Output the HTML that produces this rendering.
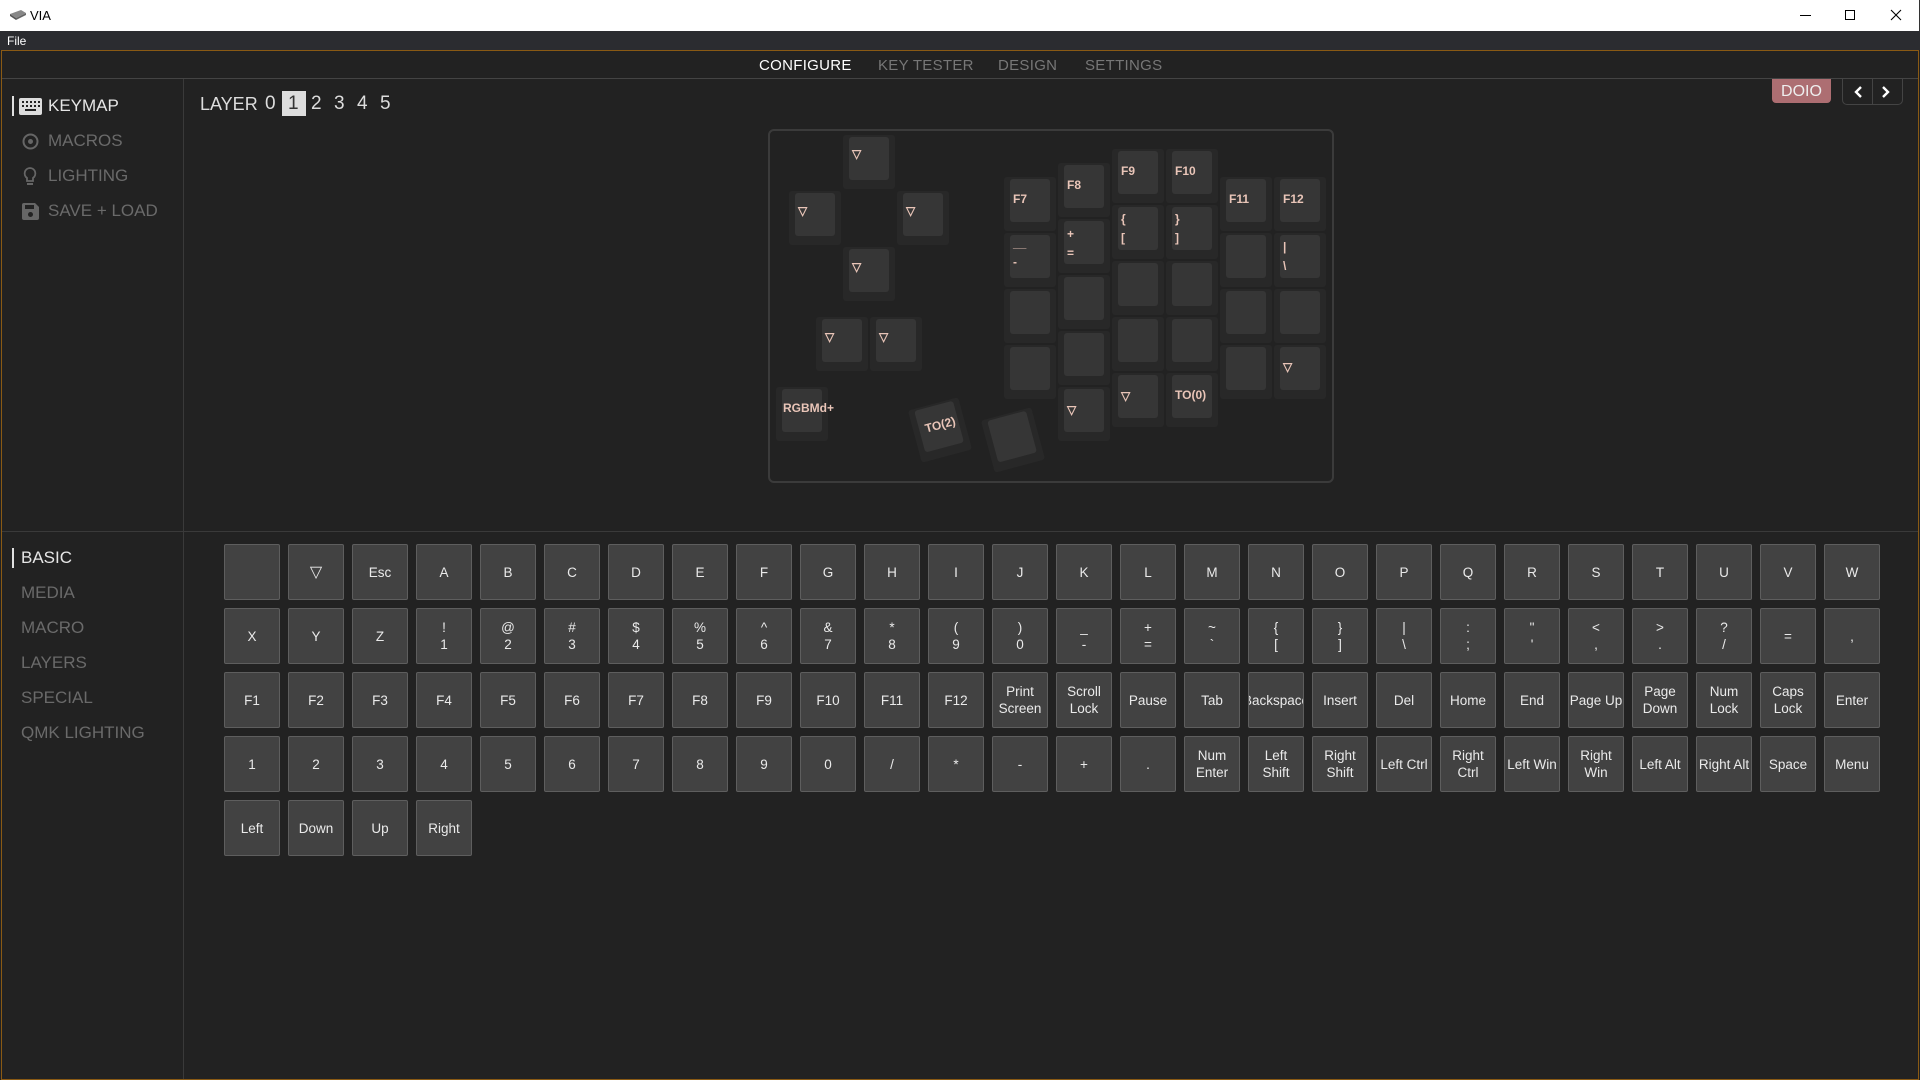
<!DOCTYPE html>
<html><head><meta charset="utf-8"><style>
*{box-sizing:border-box;margin:0;padding:0}
body{width:1920px;height:1080px;overflow:hidden;background:#222;font-family:"Liberation Sans",sans-serif;position:relative}
.abs{position:absolute}
#title{left:0;top:0;width:1920px;height:31px;background:#fff;border-right:1px solid #333}
#menu{left:0;top:31px;width:1920px;height:19px;background:#2b2c30;color:#fff;font-size:12px;padding:3px 0 0 7px}
#frame{left:1px;top:50px;width:1918px;height:1030px;border:1px solid #8a5a14}
#nav{left:2px;top:51px;width:1916px;height:28px;border-bottom:1px solid #444}
.tab{position:absolute;top:57px;font-size:15px;color:#777;letter-spacing:.3px}
#side{left:2px;top:79px;width:182px;height:1000px;border-right:1px solid #3a3a3a}
#hdiv{left:2px;top:531px;width:1916px;height:1px;background:#3a3a3a}
.si{position:absolute;left:48px;font-size:17px;color:#6a6a6a}
.si2{position:absolute;left:21px;font-size:17px;color:#6a6a6a}
.bar{position:absolute;left:12px;width:2px;height:20px;background:#e0e0e0}
.lay{position:absolute;top:93px;font-size:19px;color:#ddd}
#kb{left:768px;top:129px;width:566px;height:354px;border:2px solid #3b3b3b;border-radius:6px;background:#222}
.k{position:absolute;width:52px;height:54px;background:#282828;border-radius:3px}
.k .c{position:absolute;left:6px;right:6px;top:2px;bottom:9px;background:#363636;border-radius:3px;color:#e9c5b8;font-weight:bold;font-size:12px;padding:0 0 0 3px;white-space:nowrap}
.k .c span{position:absolute;left:3px}
#grid{left:224px;top:544px;display:grid;grid-template-columns:repeat(26,56px);grid-auto-rows:56px;gap:8px}
#grid div{background:#424242;border:1px solid #5e5e5e;border-radius:2px;color:#eaeaea;font-size:13.5px;display:flex;align-items:center;justify-content:center;text-align:center;line-height:17px;overflow:hidden;white-space:nowrap}
</style></head><body>
<div id="title" class="abs">
 <svg class="abs" style="left:9px;top:9px" width="18" height="12" viewBox="0 0 18 12"><path d="M1 5 L12 1 L17 4 L7 9 Z" fill="#888"/><path d="M1 5 L7 9 L7 11 L1 7Z" fill="#555"/><path d="M7 9 L17 4 L17 6 L7 11Z" fill="#666"/></svg>
 <div class="abs" style="left:30px;top:8px;font-size:13px;color:#000">VIA</div>
 <div class="abs" style="left:1800px;top:15px;width:11px;height:1px;background:#000"></div>
 <div class="abs" style="left:1845px;top:10px;width:10px;height:10px;border:1px solid #000"></div>
 <svg class="abs" style="left:1890px;top:9px" width="12" height="12"><path d="M1 1L11 11M11 1L1 11" stroke="#000" stroke-width="1.1"/></svg>
</div>
<div id="menu" class="abs">File</div>
<div id="frame" class="abs"></div>
<div id="nav" class="abs"></div>
<div class="tab" style="left:759px;color:#fff">CONFIGURE</div>
<div class="tab" style="left:878px">KEY TESTER</div>
<div class="tab" style="left:998px">DESIGN</div>
<div class="tab" style="left:1085px">SETTINGS</div>
<div id="side" class="abs"></div>
<div id="hdiv" class="abs"></div>

<div class="bar" style="top:96px"></div>
<svg class="abs" style="left:19px;top:98px" width="23" height="17"><rect x="0" y="0" width="23" height="17" rx="2" fill="#ddd"/><g fill="#222"><rect x="3" y="3" width="2" height="2"/><rect x="7" y="3" width="2" height="2"/><rect x="11" y="3" width="2" height="2"/><rect x="15" y="3" width="2" height="2"/><rect x="19" y="3" width="2" height="2"/><rect x="3" y="7" width="2" height="2"/><rect x="7" y="7" width="2" height="2"/><rect x="11" y="7" width="2" height="2"/><rect x="15" y="7" width="2" height="2"/><rect x="19" y="7" width="2" height="2"/><rect x="6" y="11" width="11" height="2"/></g></svg>
<div class="si" style="top:96px;color:#e6e6e6">KEYMAP</div>
<svg class="abs" style="left:22px;top:133px" width="17" height="17"><circle cx="8.5" cy="8.5" r="7" fill="none" stroke="#666" stroke-width="2"/><circle cx="8.5" cy="8.5" r="2.5" fill="#666"/></svg>
<div class="si" style="top:131px">MACROS</div>
<svg class="abs" style="left:23px;top:167px" width="14" height="20"><path d="M7 1a5.5 5.5 0 0 0-3 10v3h6v-3a5.5 5.5 0 0 0-3-10z" fill="none" stroke="#666" stroke-width="1.8"/><rect x="4" y="16" width="6" height="2" fill="#666"/></svg>
<div class="si" style="top:166px">LIGHTING</div>
<svg class="abs" style="left:22px;top:203px" width="17" height="17"><path d="M0 2a2 2 0 0 1 2-2h11l4 4v11a2 2 0 0 1-2 2H2a2 2 0 0 1-2-2z" fill="#666"/><rect x="3" y="2" width="9" height="4" fill="#222"/><circle cx="8.5" cy="11.5" r="2.5" fill="#222"/></svg>
<div class="si" style="top:201px">SAVE + LOAD</div>

<div class="bar" style="top:548px"></div>
<div class="si2" style="top:548px;color:#e6e6e6">BASIC</div>
<div class="si2" style="top:583px">MEDIA</div>
<div class="si2" style="top:618px">MACRO</div>
<div class="si2" style="top:653px">LAYERS</div>
<div class="si2" style="top:688px">SPECIAL</div>
<div class="si2" style="top:723px">QMK LIGHTING</div>

<div class="lay" style="left:200px;font-size:18px;top:94px">LAYER</div>
<div class="lay" style="left:265px">0</div>
<div class="abs" style="left:282px;top:91px;width:24px;height:25px;background:#ddd"></div>
<div class="lay" style="left:288px;color:#333">1</div>
<div class="lay" style="left:311px">2</div>
<div class="lay" style="left:334px">3</div>
<div class="lay" style="left:357px">4</div>
<div class="lay" style="left:380px">5</div>

<div class="abs" style="left:1772px;top:79px;width:59px;height:24px;background:#ad6e72;border-radius:0 0 4px 4px;color:#eee;font-size:16px;text-align:center;line-height:26px">DOIO</div>
<div class="abs" style="left:1842px;top:79px;width:61px;height:26px;border:1px solid #444;border-top:none;border-radius:0 0 5px 5px"></div>
<div class="abs" style="left:1872px;top:79px;width:1px;height:26px;background:#444"></div>
<svg class="abs" style="left:1850px;top:84px" width="44" height="16"><path d="M11 3L6 8L11 13" fill="none" stroke="#fff" stroke-width="2.4"/><path d="M33 3L38 8L33 13" fill="none" stroke="#fff" stroke-width="2.4"/></svg>

<div id="kb" class="abs"></div>
<div class="k" style="left:843px;top:135px"><div class="c"><span style="top:10px">▽</span></div></div>
<div class="k" style="left:789px;top:191px"><div class="c"><span style="top:11px">▽</span></div></div>
<div class="k" style="left:897px;top:191px"><div class="c"><span style="top:11px">▽</span></div></div>
<div class="k" style="left:843px;top:247px"><div class="c"><span style="top:11px">▽</span></div></div>
<div class="k" style="left:816px;top:317px"><div class="c"><span style="top:11px">▽</span></div></div>
<div class="k" style="left:870px;top:317px"><div class="c"><span style="top:11px">▽</span></div></div>
<div class="k" style="left:776px;top:387px"><div class="c" style="overflow:visible"><span style="top:12px;left:1px">RGBMd+</span></div></div>
<div class="k" style="left:914px;top:403px;transform:rotate(-15deg)"><div class="c"><span style="top:13px;left:6px">TO(2)</span></div></div>
<div class="k" style="left:987px;top:413px;transform:rotate(-15deg)"><div class="c"></div></div>
<div class="k" style="left:1004px;top:177px"><div class="c"><span style="top:13px">F7</span></div></div>
<div class="k" style="left:1004px;top:233px"><div class="c"><span style="top:1px">__</span><span style="top:20px">-</span></div></div>
<div class="k" style="left:1004px;top:289px"><div class="c"></div></div>
<div class="k" style="left:1004px;top:345px"><div class="c"></div></div>
<div class="k" style="left:1058px;top:163px"><div class="c"><span style="top:13px">F8</span></div></div>
<div class="k" style="left:1058px;top:219px"><div class="c"><span style="top:6px">+</span><span style="top:25px">=</span></div></div>
<div class="k" style="left:1058px;top:275px"><div class="c"></div></div>
<div class="k" style="left:1058px;top:331px"><div class="c"></div></div>
<div class="k" style="left:1058px;top:387px"><div class="c"><span style="top:14px">▽</span></div></div>
<div class="k" style="left:1112px;top:149px"><div class="c"><span style="top:13px">F9</span></div></div>
<div class="k" style="left:1112px;top:205px"><div class="c"><span style="top:5px">{</span><span style="top:24px">[</span></div></div>
<div class="k" style="left:1112px;top:261px"><div class="c"></div></div>
<div class="k" style="left:1112px;top:317px"><div class="c"></div></div>
<div class="k" style="left:1112px;top:373px"><div class="c"><span style="top:14px">▽</span></div></div>
<div class="k" style="left:1166px;top:149px"><div class="c"><span style="top:13px">F10</span></div></div>
<div class="k" style="left:1166px;top:205px"><div class="c"><span style="top:5px">}</span><span style="top:24px">]</span></div></div>
<div class="k" style="left:1166px;top:261px"><div class="c"></div></div>
<div class="k" style="left:1166px;top:317px"><div class="c"></div></div>
<div class="k" style="left:1166px;top:373px"><div class="c"><span style="top:13px">TO(0)</span></div></div>
<div class="k" style="left:1220px;top:177px"><div class="c"><span style="top:13px">F11</span></div></div>
<div class="k" style="left:1220px;top:233px"><div class="c"></div></div>
<div class="k" style="left:1220px;top:289px"><div class="c"></div></div>
<div class="k" style="left:1220px;top:345px"><div class="c"></div></div>
<div class="k" style="left:1274px;top:177px"><div class="c"><span style="top:13px">F12</span></div></div>
<div class="k" style="left:1274px;top:233px"><div class="c"><span style="top:5px">|</span><span style="top:24px">\</span></div></div>
<div class="k" style="left:1274px;top:289px"><div class="c"></div></div>
<div class="k" style="left:1274px;top:345px"><div class="c"><span style="top:13px">▽</span></div></div>

<div id="grid" class="abs">
<div></div><div style="font-size:16px">▽</div><div>Esc</div><div>A</div><div>B</div><div>C</div><div>D</div><div>E</div><div>F</div><div>G</div><div>H</div><div>I</div><div>J</div><div>K</div><div>L</div><div>M</div><div>N</div><div>O</div><div>P</div><div>Q</div><div>R</div><div>S</div><div>T</div><div>U</div><div>V</div><div>W</div>
<div>X</div><div>Y</div><div>Z</div><div>!<br>1</div><div>@<br>2</div><div>#<br>3</div><div>$<br>4</div><div>%<br>5</div><div>^<br>6</div><div>&amp;<br>7</div><div>*<br>8</div><div>(<br>9</div><div>)<br>0</div><div>_<br>-</div><div>+<br>=</div><div>~<br>`</div><div>{<br>[</div><div>}<br>]</div><div>|<br>\</div><div>:<br>;</div><div>"<br>'</div><div>&lt;<br>,</div><div>&gt;<br>.</div><div>?<br>/</div><div>=</div><div>,</div>
<div>F1</div><div>F2</div><div>F3</div><div>F4</div><div>F5</div><div>F6</div><div>F7</div><div>F8</div><div>F9</div><div>F10</div><div>F11</div><div>F12</div><div>Print<br>Screen</div><div>Scroll<br>Lock</div><div>Pause</div><div>Tab</div><div>Backspace</div><div>Insert</div><div>Del</div><div>Home</div><div>End</div><div>Page Up</div><div>Page<br>Down</div><div>Num<br>Lock</div><div>Caps<br>Lock</div><div>Enter</div>
<div>1</div><div>2</div><div>3</div><div>4</div><div>5</div><div>6</div><div>7</div><div>8</div><div>9</div><div>0</div><div>/</div><div>*</div><div>-</div><div>+</div><div>.</div><div>Num<br>Enter</div><div>Left<br>Shift</div><div>Right<br>Shift</div><div>Left Ctrl</div><div>Right<br>Ctrl</div><div>Left Win</div><div>Right<br>Win</div><div>Left Alt</div><div>Right Alt</div><div>Space</div><div>Menu</div>
<div>Left</div><div>Down</div><div>Up</div><div>Right</div>
</div>
</body></html>
